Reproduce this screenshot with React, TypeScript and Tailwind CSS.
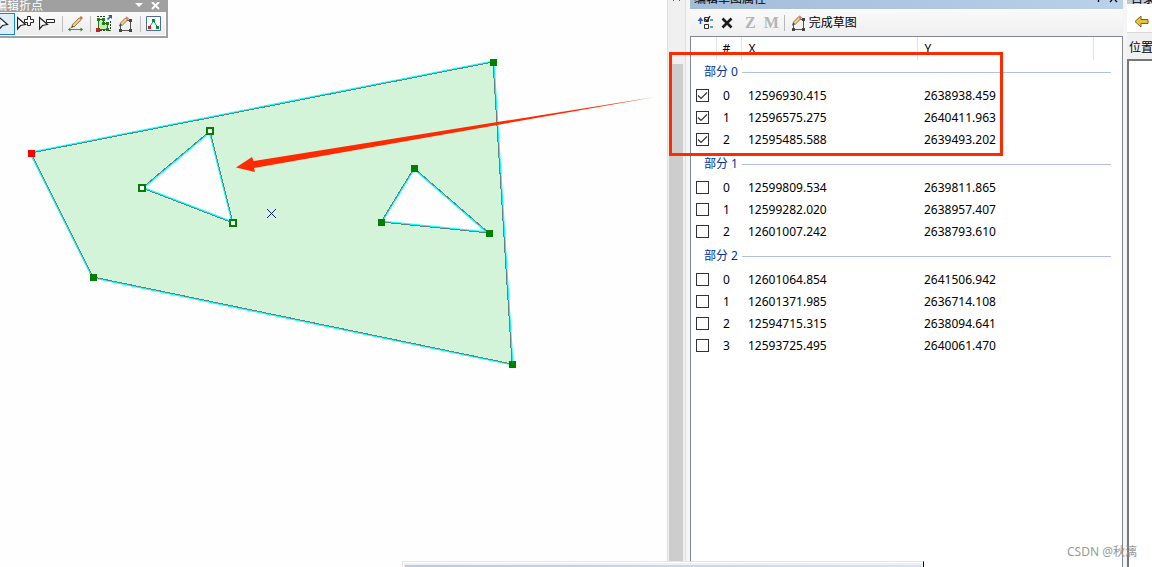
import { useState } from 'react';
import type { ReactNode } from 'react';

type Vertex = {
  id: number;
  x: string;
  y: string;
  checked?: boolean;
};

type Part = {
  name: string;
  vertices: Vertex[];
};

const PARTS: Part[] = [
  {
    name: '部分 0',
    vertices: [
      { id: 0, x: '12596930.415', y: '2638938.459', checked: true },
      { id: 1, x: '12596575.275', y: '2640411.963', checked: true },
      { id: 2, x: '12595485.588', y: '2639493.202', checked: true },
    ],
  },
  {
    name: '部分 1',
    vertices: [
      { id: 0, x: '12599809.534', y: '2639811.865' },
      { id: 1, x: '12599282.020', y: '2638957.407' },
      { id: 2, x: '12601007.242', y: '2638793.610' },
    ],
  },
  {
    name: '部分 2',
    vertices: [
      { id: 0, x: '12601064.854', y: '2641506.942' },
      { id: 1, x: '12601371.985', y: '2636714.108' },
      { id: 2, x: '12594715.315', y: '2638094.641' },
      { id: 3, x: '12593725.495', y: '2640061.470' },
    ],
  },
];

// outer ring followed by the two holes
const POLYGON =
  'M31 153 L493 62 L512 364 L93 277 Z M210 131 L233 223 L142 188 Z M414 168 L489 233 L381 222 Z';

const SOLID_NODES = [
  [493, 62],
  [512, 364],
  [93, 277],
  [414, 168],
  [381, 222],
  [489, 233],
];

const OPEN_NODES = [
  [210, 131],
  [142, 188],
  [233, 223],
];

const CURSOR = 'M1.5 1.5 V13 L4.5 9.5 L9.5 8.5 Z';

function FinishSketchIcon() {
  return (
    <svg width="16" height="16" viewBox="0 0 16 16" className="shrink-0">
      <path d="M2.5 14 V8 M2.5 14.5 H12.5 V4.5 H9" fill="none" stroke="#555" />
      <path d="M1 13h3v3H1z M11 13h3v3h-3z M11 3h3v3h-3z" fill="#444" />
      <path d="M3 8.5 L8.5 3" stroke="#8a6a30" strokeWidth="3.6" />
      <path d="M3.4 8.1 L8.5 3" stroke="#f5cf86" strokeWidth="2.2" />
      <path d="M8.3 3.2 L10 1.5" stroke="#d98076" strokeWidth="3.4" />
      <path d="M1 10.5 L2 7.5 L4 9.5 Z" fill="#444" />
    </svg>
  );
}

function ToolButton({ label, active, children }: { label: string; active?: boolean; children: ReactNode }) {
  return (
    <button
      title={label}
      aria-label={label}
      className={`flex h-[22px] w-[22px] shrink-0 items-center justify-center border ${
        active ? 'border-[#1883d7] bg-[#e0eefa]' : 'border-transparent hover:bg-[#e0eefa]'
      }`}
    >
      {children}
    </button>
  );
}

function Divider() {
  return <span className="mr-[2px] ml-[3px] h-4 w-px shrink-0 bg-[#c0c0c0]" />;
}

function VertexToolbar() {
  return (
    <div className="absolute top-0 -left-2 w-[176px] border-r-2 border-b-2 border-[#a0a0a0] bg-[#f4f4f4]">
      <div className="flex h-3 items-center bg-[#a0a0a0] pl-[3px] text-xs leading-3 text-white">
        <span className="flex-1">编辑折点</span>
        <button aria-label="选项" className="mr-2">
          <svg width="8" height="8" viewBox="0 0 8 8">
            <path d="M0 1 H8 L4 5 Z" fill="#fff" />
          </svg>
        </button>
        <button aria-label="关闭" className="mr-[6px]">
          <svg width="9" height="8" viewBox="0 0 9 8">
            <path d="M1 0 L8 7 M8 0 L1 7" stroke="#fff" strokeWidth="2" />
          </svg>
        </button>
      </div>
      <div className="flex h-6 items-center border-r border-b border-white bg-linear-to-b from-[#fafafa] to-[#ececec] pl-px">
        <ToolButton label="选择折点" active>
          <svg width="14" height="16" viewBox="-1 0 14 16">
            <path d={CURSOR} fill="#fff" stroke="#222" strokeWidth="1.2" />
          </svg>
        </ToolButton>
        <ToolButton label="添加折点">
          <svg width="18" height="16" viewBox="1 0 18 16" className="shrink-0">
            <path d={CURSOR} fill="#fff" stroke="#222" strokeWidth="1.2" />
            <path d="M11.5 0.5h3v3h3v3h-3v3h-3v-3h-3v-3h3z" fill="#fff" stroke="#222" />
          </svg>
        </ToolButton>
        <ToolButton label="删除折点">
          <svg width="18" height="16" viewBox="1 0 18 16" className="shrink-0">
            <path d={CURSOR} fill="#fff" stroke="#222" strokeWidth="1.2" />
            <path d="M8.5 3.5h8v3h-8z" fill="#fff" stroke="#222" />
          </svg>
        </ToolButton>
        <Divider />
        <ToolButton label="修改草图">
          <svg width="16" height="16" viewBox="0 0 16 16" className="shrink-0">
            <path d="M1 13.5 H14" stroke="#3f9a3f" />
            <path d="M0 13.5l2.5-2v4z M15 13.5l-2.5-2v4z" fill="#2e7d2e" />
            <path d="M5 10 L12 3" stroke="#8a6a30" strokeWidth="3.2" />
            <path d="M5.2 9.8 L12 3" stroke="#f5cf86" strokeWidth="2" />
            <path d="M12 3 L14 1" stroke="#c9736a" strokeWidth="3" />
            <path d="M3 12 L4 9 L6 11 Z" fill="#444" />
          </svg>
        </ToolButton>
        <Divider />
        <ToolButton label="按几何选择">
          <svg width="18" height="17" viewBox="0 0 18 17" className="shrink-0">
            <path d="M2 1.5 H11 M15.5 6 V15.5 H5" fill="none" stroke="#333" strokeDasharray="2 1" />
            <path d="M3.5 4.5 H8.5 V8.5 H12.5 V14.5 H3.5 Z" fill="#c5ecab" stroke="#1f7a1f" />
            <path d="M2 3h3v3H2z M7 3h3v3H7z M7 7h3v3H7z M11 7h3v3h-3z M11 13h3v3h-3z" fill="#1f7a1f" />
            <path d="M1 13h4v4H1z" fill="#c8201e" />
            <path d="M12.5 4.5 L16 1" stroke="#1b5fa8" strokeWidth="1.6" />
            <path d="M13 0h4v4z" fill="#1b5fa8" />
          </svg>
        </ToolButton>
        <ToolButton label="完成草图">
          <FinishSketchIcon />
        </ToolButton>
        <Divider />
        <ToolButton label="草图属性">
          <svg width="16" height="16" viewBox="0 0 16 16" className="shrink-0">
            <path d="M0.5 0.5h14v14H0.5z" fill="#fff" stroke="#4a6e96" />
            <path d="M3.5 11 L7.5 5 L11.5 11" fill="none" stroke="#1a9a4a" />
            <path d="M6 3h3v3H6z M10 10h3v3h-3z" fill="#0a8a3a" />
            <path d="M2 10h3v3H2z" fill="#d02020" />
          </svg>
        </ToolButton>
      </div>
    </div>
  );
}

function MapCanvas() {
  return (
    <svg width="667" height="560" viewBox="0 0 667 560" className="block" role="img" aria-label="草图">
      {/* the fill hides the inner half of the cyan stroke */}
      <path d={POLYGON} fill="none" stroke="#00ffff" strokeWidth="3" />
      <path d={POLYGON} fill="#d3f4d8" fillRule="evenodd" />
      <path d={POLYGON} fill="none" stroke="#5a8486" shapeRendering="crispEdges" />
      <path d="M267 209 L276 218 M276 209 L267 218" stroke="#1c1c9c" />
      <path d="M236 167.5 L252 157 L253.5 161 L655 97 L254 168 L255 172 Z" fill="#ff2a00" />
      {SOLID_NODES.map(([x, y]) => (
        <rect key={`${x}-${y}`} x={x - 3} y={y - 3} width="7" height="7" fill="#008000" />
      ))}
      {OPEN_NODES.map(([x, y]) => (
        <rect key={`${x}-${y}`} x={x - 3} y={y - 3} width="6" height="6" fill="#fff" stroke="#008000" strokeWidth="2" />
      ))}
      <rect x="28" y="150" width="7" height="7" fill="#f00" />
    </svg>
  );
}

function VertexCheckbox({ label, defaultChecked }: { label: string; defaultChecked: boolean }) {
  const [checked, setChecked] = useState(defaultChecked);

  return (
    <span className="relative ml-[5px] block h-[13px] w-[13px]">
      <input
        type="checkbox"
        aria-label={label}
        checked={checked}
        onChange={() => setChecked(!checked)}
        className="block h-[13px] w-[13px] appearance-none border border-[#333] bg-white"
      />
      {checked && (
        <svg width="13" height="13" viewBox="0 0 13 13" className="pointer-events-none absolute inset-0">
          <path d="M2 6.5 L5 9.5 L11 3.5" fill="none" stroke="#333" strokeWidth="1.2" />
        </svg>
      )}
    </span>
  );
}

function VertexTable() {
  return (
    <table className="w-full table-fixed border-collapse text-left">
      <colgroup>
        <col className="w-[25px]" />
        <col className="w-[25px]" />
        <col className="w-[176px]" />
        <col className="w-[176px]" />
        <col />
      </colgroup>
      <thead>
        <tr className="h-[23px]">
          <th aria-label="选择" className="border-r border-[#e5e5e5] p-0" />
          <th className="border-r border-[#e5e5e5] p-0 pl-[6px] font-normal">#</th>
          <th className="border-r border-[#e5e5e5] p-0 pl-[7px] font-normal">X</th>
          <th className="border-r border-[#e5e5e5] p-0 pl-[7px] font-normal">Y</th>
          <th aria-label="其他" className="p-0" />
        </tr>
      </thead>
      {PARTS.map((part, index) => (
        <tbody key={part.name}>
          <tr className={index === 0 ? 'h-6' : 'h-[26px]'}>
            <th colSpan={5} scope="rowgroup" className="p-0 align-bottom font-normal">
              <div className="flex h-6 items-center gap-1 pr-[11px] pl-[13px] text-[#003399]">
                {part.name}
                <span className="h-px flex-1 bg-[#b0c0e2]" />
              </div>
            </th>
          </tr>
          {part.vertices.map((vertex) => (
            <tr key={vertex.id} className="h-[22px]">
              <td className="p-0">
                <VertexCheckbox label={`${part.name} - ${vertex.id}`} defaultChecked={!!vertex.checked} />
              </td>
              <td className="p-0 pt-[2px] pl-[7px]">{vertex.id}</td>
              <td className="p-0 pt-[2px] pl-[7px]">{vertex.x}</td>
              <td className="p-0 pt-[2px] pl-[7px]">{vertex.y}</td>
              <td className="p-0" />
            </tr>
          ))}
        </tbody>
      ))}
    </table>
  );
}

function SketchPanel() {
  return (
    <section className="relative flex w-[433px] shrink-0 flex-col">
      <header className="flex h-[9px] shrink-0 items-start bg-linear-to-r from-[#a3bcd9] to-[#b9d1ea] pl-1 leading-3">
        <h2 className="-mt-[7px] flex-1">编辑草图属性</h2>
        <svg width="24" height="3" viewBox="0 0 24 3" className="mr-1">
          <path d="M3.5 0 V2 M15 2 L17 0 M22 2 L20 0" stroke="#111" strokeWidth="1.4" />
        </svg>
      </header>
      <div className="flex h-[27px] shrink-0 items-center bg-linear-to-b from-[#fafafa] to-[#efefef] pl-[7px]">
        <button aria-label="选择选项" className="mr-2">
          <svg width="16" height="16" viewBox="0 0 16 16" className="block">
            <path d="M3.5 9 V4" stroke="#2f62b0" strokeWidth="1.6" />
            <path d="M0.5 6 L3.5 2 L6.5 6 Z" fill="#2f62b0" />
            <path d="M7.5 2.5h4v4h-4z M7.5 9.5h4v4h-4z" fill="#fff" stroke="#333" />
            <path d="M8 4 L10 6 L13 1" fill="none" stroke="#222" strokeWidth="1.4" />
            <path d="M13 5 H16 M13 12 H16" stroke="#2f7fd0" strokeWidth="1.4" />
          </svg>
        </button>
        <button aria-label="删除" className="mr-3">
          <svg width="12" height="12" viewBox="0 0 12 12" className="block">
            <path d="M1.5 1.5 L10.5 10.5 M10.5 1.5 L1.5 10.5" stroke="#1c1c1c" strokeWidth="2.6" />
          </svg>
        </button>
        <button disabled className="mr-2 font-['Liberation_Serif',serif] text-base leading-5 font-bold text-[#b4b4b4]">
          Z
        </button>
        <button disabled className="font-['Liberation_Serif',serif] text-base leading-5 font-bold text-[#b4b4b4]">
          M
        </button>
        <span className="mr-[6px] ml-[5px] h-4 w-px bg-[#b8b8b8]" />
        <button className="flex items-center gap-[2px]">
          <FinishSketchIcon />
          完成草图
        </button>
      </div>
      <div className="min-h-0 flex-1 border border-b-0 border-[#828790] bg-white">
        <VertexTable />
      </div>
      {/* highlight around the checked vertices */}
      <div className="pointer-events-none absolute top-[52px] -left-[21px] h-[104px] w-[334px] border-3 border-[#ff2a00]" />
    </section>
  );
}

function CatalogPanel() {
  return (
    <section className="ml-1 flex w-[25px] shrink-0 flex-col overflow-hidden whitespace-nowrap">
      <header className="h-1 shrink-0 bg-[#b9cbe0] pl-1 leading-3">
        <h2 className="-mt-[7px] block">目录</h2>
      </header>
      <div className="flex h-[29px] shrink-0 items-center border-b border-[#d8d8d8] bg-white pt-[6px] pl-[7px]">
        <button aria-label="后退">
          <svg width="15" height="13" viewBox="0 0 15 13" className="block">
            <path d="M1 6.5 L7 1 V4.5 H14 V8.5 H7 V12 Z" fill="#e6c435" stroke="#7a6414" />
          </svg>
        </button>
      </div>
      <div className="flex h-[26px] shrink-0 items-center bg-[#f0f0f0] pt-1 pl-[2px]">位置</div>
      <div className="flex-1 border-t-2 border-l-2 border-[#777] bg-white" />
    </section>
  );
}

export default function App() {
  return (
    <div className="relative flex h-screen overflow-hidden bg-[#f5f5f5] font-['Noto_Sans','Noto_Sans_CJK_SC',sans-serif] text-xs leading-4 text-black">
      <main className="relative min-w-0 flex-1 overflow-hidden bg-[#fefefe]">
        <MapCanvas />
        <VertexToolbar />
      </main>
      <div className="mr-1 flex w-[19px] shrink-0 flex-col border-x border-[#e0e0e0] bg-[#f0f0f0] px-px">
        <svg width="16" height="3" viewBox="0 0 16 3" className="mb-[61px]">
          <path d="M4 1 L5 0 M10 0 L11 1" stroke="#555" />
        </svg>
        <div className="mr-px flex-1 bg-[#cdcdcd]" />
      </div>
      <SketchPanel />
      <CatalogPanel />

      {/* top edge of the window docked below */}
      <div className="absolute right-[228px] bottom-0 h-[6px] w-[522px] border-t border-r-1 border-l border-t-[#e6e6e6] border-r-black border-l-[#e6e6e6] bg-white pt-px pr-px pl-px">
        <div className="h-1 border-t-2 border-l border-[#f0f0f0] bg-linear-to-r from-[#b9cadb] to-[#d6e4f1]" />
      </div>
      <p className="absolute right-[15px] bottom-[7px] text-[#999]">CSDN @秋漓</p>
    </div>
  );
}
